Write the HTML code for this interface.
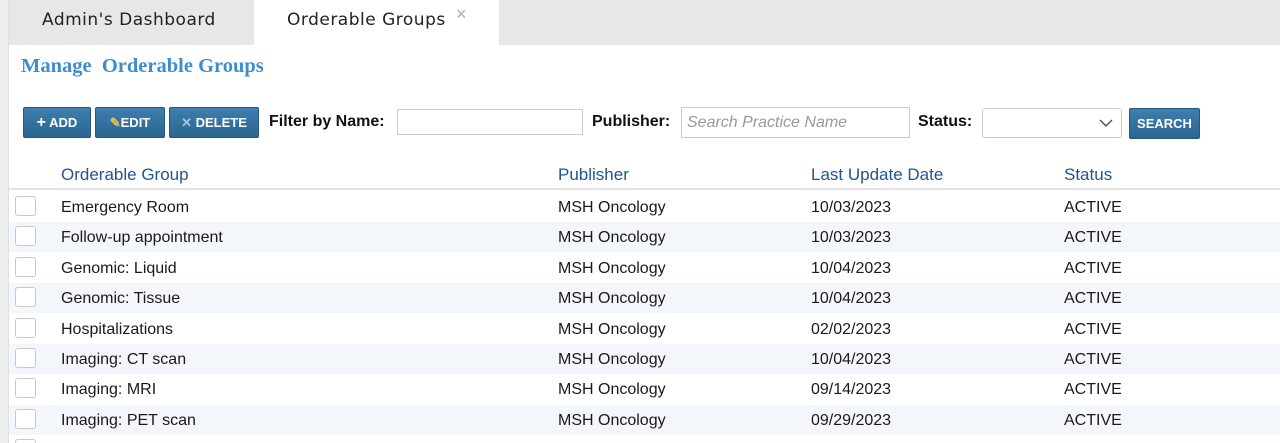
<!DOCTYPE html>
<html><head><style>
*{box-sizing:border-box;margin:0;padding:0}
html,body{width:1280px;height:443px;overflow:hidden}
body{background:#fff;font-family:"Liberation Sans",Arial,sans-serif;position:relative}
.abs{position:absolute}
.strip{left:0;top:0;width:9px;height:443px;background:#eceded;border-right:1px solid #e0e0e0}
.tabs{left:9px;top:0;width:1271px;height:45px;background:#e6e7e9}
.tab{top:0;height:45px;font-family:"DejaVu Sans",sans-serif;font-size:17px;color:#222;line-height:41px;letter-spacing:0.5px}
.btn{height:31px;background:linear-gradient(#3e7fae,#2b6691);border:1px solid #245a82;border-radius:2px;color:#fff;font-size:13px;font-weight:bold;line-height:29px;text-align:center}
.lbl{font-size:16px;font-weight:bold;color:#111}
.inp{border:1px solid #ccc;background:#fff}
.th{top:165px;font-size:17px;color:#1f5591}
.row{left:9px;width:1271px;height:30.4px}
.cell{font-size:16px;color:#1a1a1a}
.cb{left:15px;width:21px;height:20px;border:1px solid #c8c8c8;border-radius:3px;background:#fff}
</style></head><body>
<div class="abs strip"></div>
<div class="abs tabs"></div>
<div class="abs tab" style="left:42px">Admin's Dashboard</div>
<div class="abs" style="left:254px;top:0;width:245px;height:46px;background:#fff"></div>
<div class="abs tab" style="left:287px">Orderable Groups</div>
<div class="abs" style="left:456px;top:4px;color:#aaa;font-size:18px">×</div>
<div class="abs" style="left:21px;top:55px;font-family:'Liberation Serif',serif;font-weight:bold;font-size:20.5px;color:#3d8ed0">Manage&nbsp; Orderable Groups</div>

<div class="abs btn" style="left:23px;top:107px;width:68px"><b style="font-size:16px">+</b> ADD</div>
<div class="abs btn" style="left:95px;top:107px;width:70px"><span style="color:#e8c060">✎</span>EDIT</div>
<div class="abs btn" style="left:169px;top:107px;width:90px"><span style="color:#a9c4dc">✕</span> DELETE</div>
<div class="abs lbl" style="left:269px;top:113px">Filter by Name:</div>
<div class="abs inp" style="left:397px;top:109px;width:186px;height:26px"></div>
<div class="abs lbl" style="left:592px;top:113px">Publisher:</div>
<div class="abs inp" style="left:681px;top:107px;width:229px;height:31px;font-size:16px;font-style:italic;color:#999;padding:6px 0 0 5px">Search Practice Name</div>
<div class="abs lbl" style="left:918px;top:113px">Status:</div>
<div class="abs inp" style="left:982px;top:108px;width:140px;height:30px;border-radius:3px">
<svg class="abs" style="left:116px;top:9px" width="14" height="10"><path d="M1 2 L7 8 L13 2" fill="none" stroke="#444" stroke-width="1.3"/></svg></div>
<div class="abs btn" style="left:1129px;top:108px;width:71px;height:31px">SEARCH</div>

<div class="abs th" style="left:61px">Orderable Group</div>
<div class="abs th" style="left:558px">Publisher</div>
<div class="abs th" style="left:811px">Last Update Date</div>
<div class="abs th" style="left:1064px">Status</div>
<div class="abs" style="left:9px;top:188px;width:1271px;height:2px;background:#e3e3e3"></div>

<div class="abs row" style="top:222px;background:#f3f6fa"></div>
<div class="abs row" style="top:283px;background:#f3f6fa"></div>
<div class="abs row" style="top:344px;background:#f3f6fa"></div>
<div class="abs row" style="top:405px;background:#f3f6fa"></div>

<div class="abs cb" style="top:196px"></div><div class="abs cb" style="top:226px"></div><div class="abs cb" style="top:257px"></div><div class="abs cb" style="top:287px"></div><div class="abs cb" style="top:318px"></div><div class="abs cb" style="top:348px"></div><div class="abs cb" style="top:378px"></div><div class="abs cb" style="top:409px"></div><div class="abs cb" style="top:439px"></div>

<div class="abs cell" style="left:61px;top:193px;line-height:30.4px">Emergency Room<br>Follow-up appointment<br>Genomic: Liquid<br>Genomic: Tissue<br>Hospitalizations<br>Imaging: CT scan<br>Imaging: MRI<br>Imaging: PET scan</div>
<div class="abs cell" style="left:558px;top:193px;line-height:30.4px">MSH Oncology<br>MSH Oncology<br>MSH Oncology<br>MSH Oncology<br>MSH Oncology<br>MSH Oncology<br>MSH Oncology<br>MSH Oncology</div>
<div class="abs cell" style="left:811px;top:193px;line-height:30.4px">10/03/2023<br>10/03/2023<br>10/04/2023<br>10/04/2023<br>02/02/2023<br>10/04/2023<br>09/14/2023<br>09/29/2023</div>
<div class="abs cell" style="left:1064px;top:193px;line-height:30.4px">ACTIVE<br>ACTIVE<br>ACTIVE<br>ACTIVE<br>ACTIVE<br>ACTIVE<br>ACTIVE<br>ACTIVE</div>
</body></html>
